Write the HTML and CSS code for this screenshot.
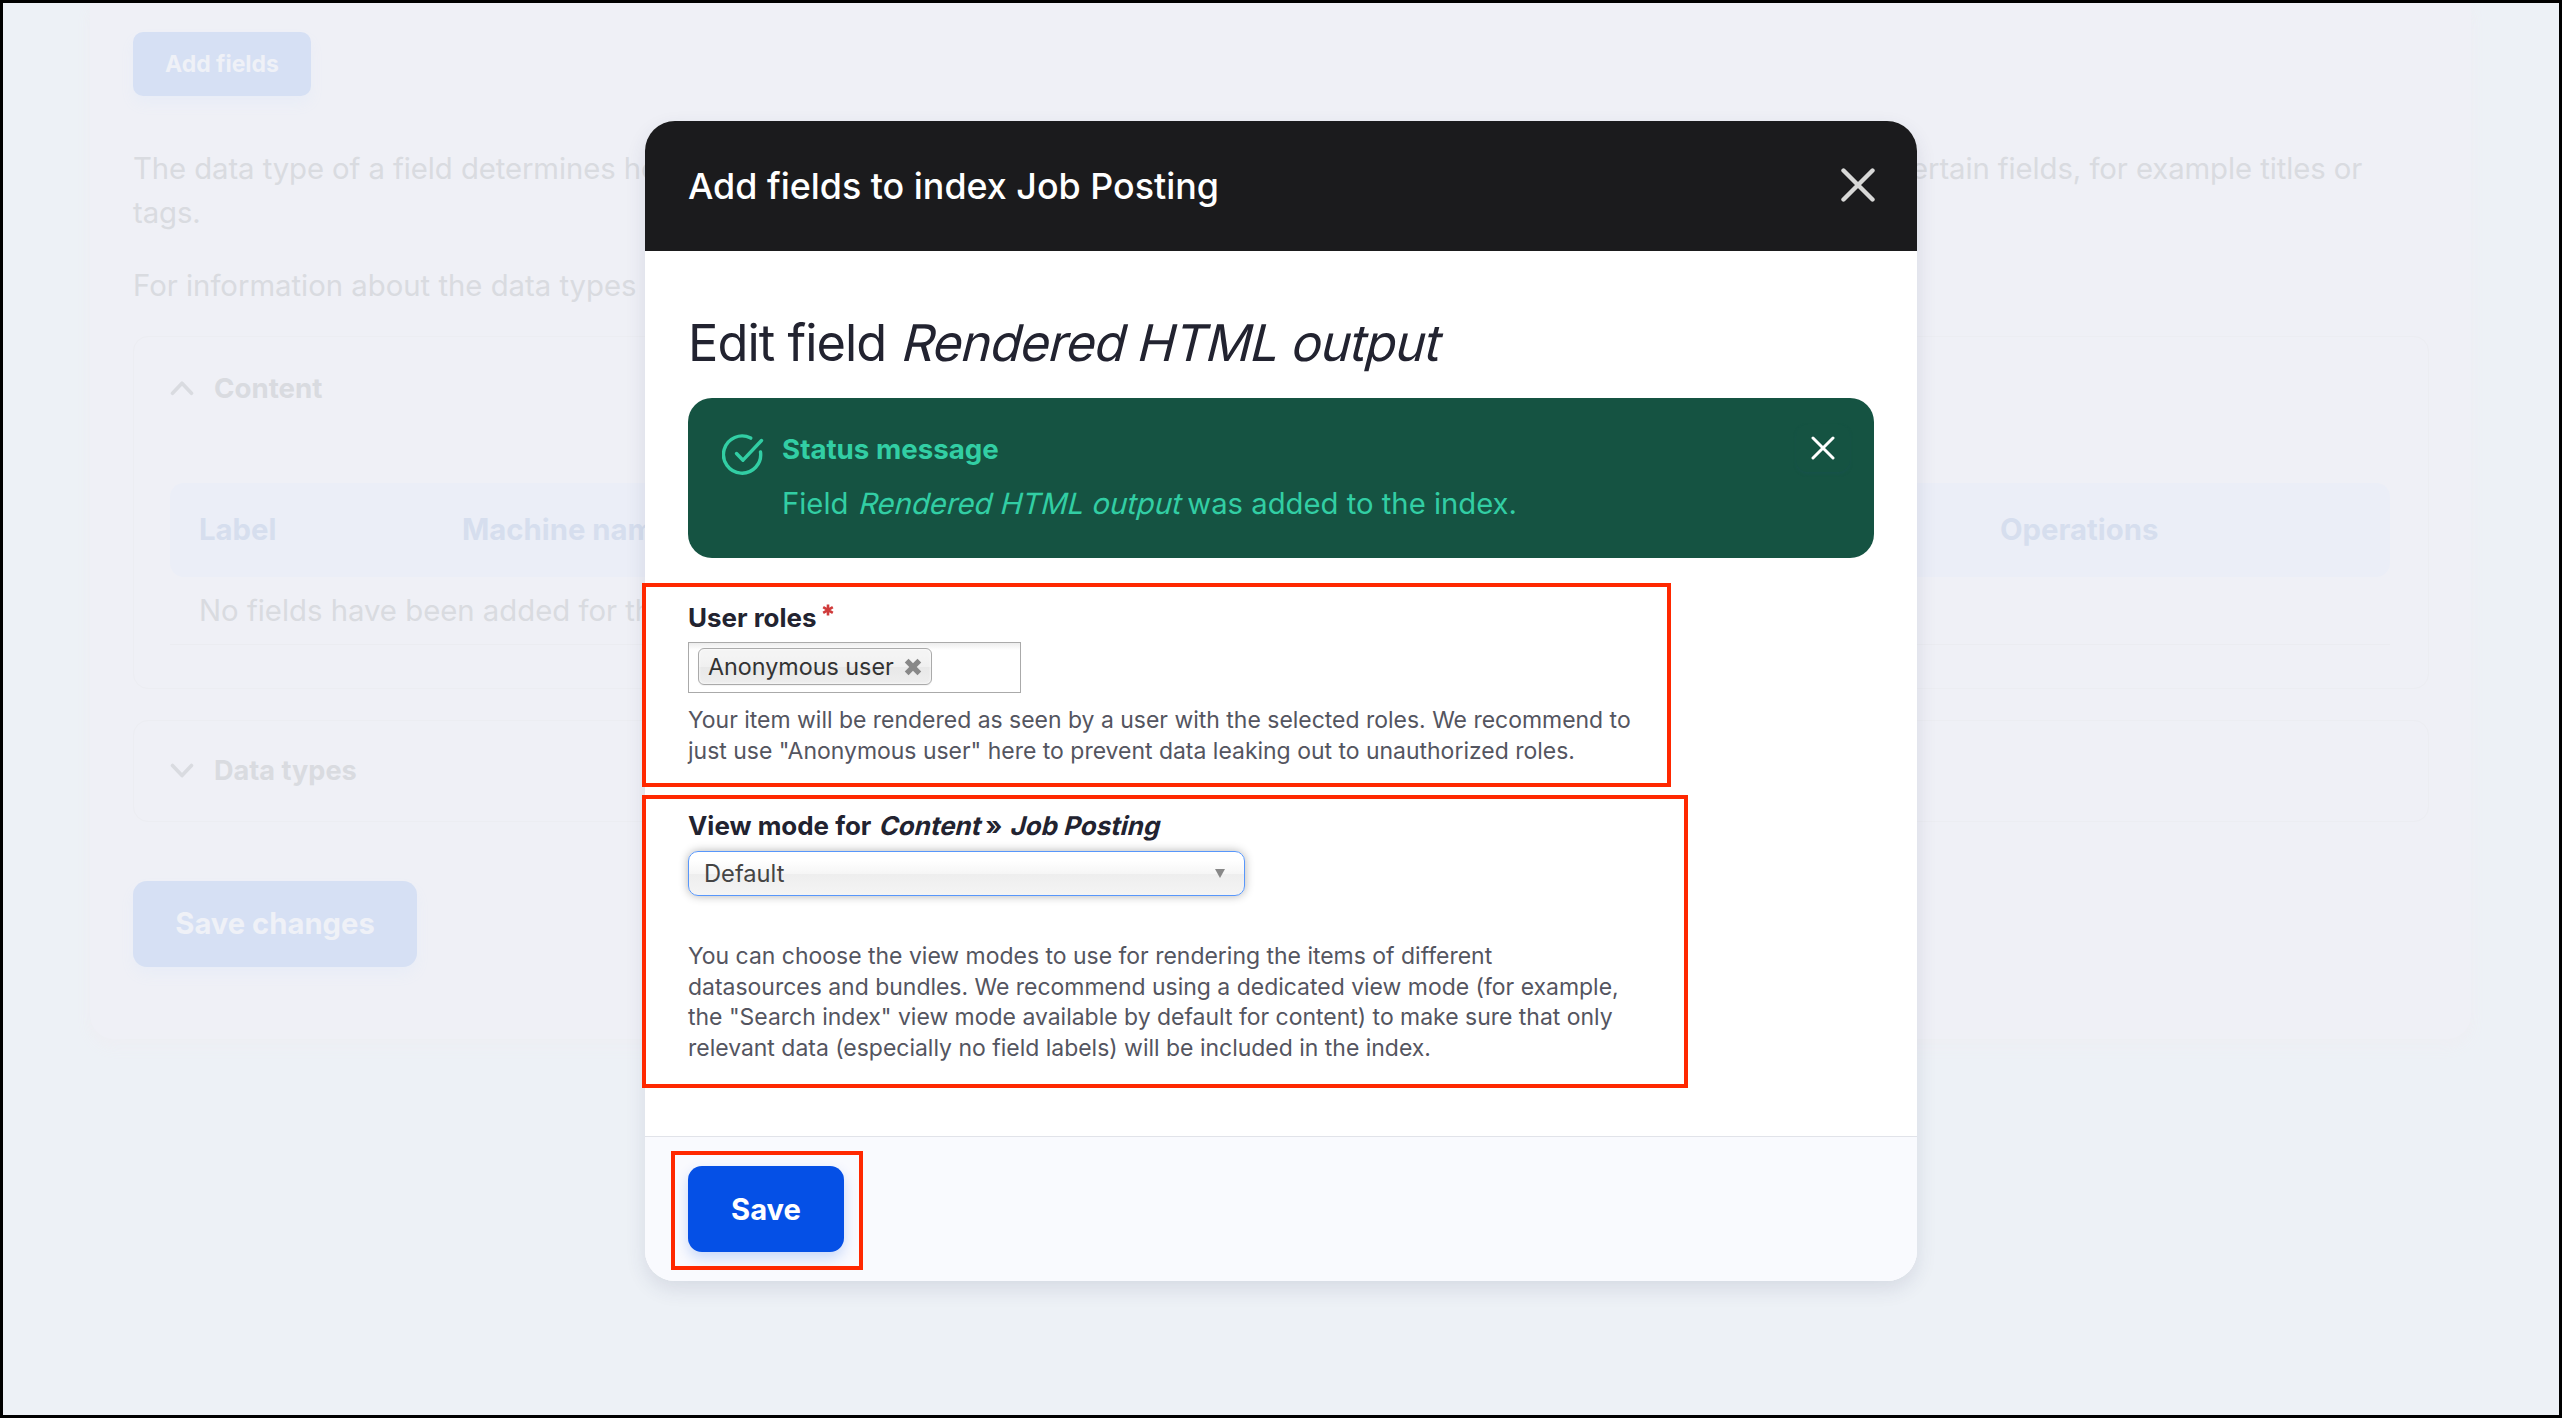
FILE: index.html
```html
<!DOCTYPE html>
<html lang="en">
<head>
<meta charset="utf-8">
<title>Add fields to index Job Posting</title>
<link rel="stylesheet" href="styles.css">
</head>
<body>
<main class="page">
  <section class="card">
    <button class="button button--small">Add fields</button>
    <p class="intro">The data type of a field determines how it can be used for searching and filtering. The boost is used to give additional weight to certain fields, for example titles or tags.</p>
    <p class="intro intro--second">For information about the data types available for indexing, see the data types table at the bottom of the page.</p>
    <div class="details details--open">
      <div class="summary">
        <svg class="chevron" viewBox="0 0 24 16"><path d="M2.500 13.300 12 3.200l9.500 10.100"/></svg>
        <span>Content</span>
      </div>
      <div class="table">
        <div class="table-head"><span>Label</span><span>Machine name</span><span>Operations</span></div>
        <div class="table-row">No fields have been added for this datasource.</div>
      </div>
    </div>
    <div class="details">
      <div class="summary summary--types">
        <svg class="chevron" viewBox="0 0 24 16"><path d="M2.500 2.500 12 12.600l9.500-10.100"/></svg>
        <span>Data types</span>
      </div>
    </div>
    <button class="button">Save changes</button>
  </section>
</main>

<div class="dialog" role="dialog">
  <header class="dialog-head">
    <h1 class="dialog-title">Add fields to index Job Posting</h1>
    <svg class="dialog-close" viewBox="0 0 34 34"><path d="M2.500 2.500 31.500 31.500M31.500 2.500 2.500 31.500"/></svg>
  </header>
  <div class="dialog-body">
    <h2 class="heading">Edit field <em>Rendered HTML output</em></h2>
    <div class="status">
      <svg class="status-icon" viewBox="0 0 42 42"><path d="M38.500 18a18.600 18.600 0 1 1-9.800-13.900"/><path d="M14.500 19.500 21 26.200 39.500 6.500"/></svg>
      <div class="status-text">
        <div class="status-title">Status message</div>
        <div class="status-message">Field <em>Rendered HTML output</em> was added to the index.</div>
      </div>
      <span class="status-dismiss"><svg viewBox="0 0 24 24"><path d="M2 2 22 22M22 2 2 22"/></svg></span>
    </div>
    <div class="field field--roles">
      <div class="label">User roles<svg class="required" viewBox="0 0 12 12"><path d="M6 .5v11M1.200 3.200l9.600 5.600M10.800 3.200 1.200 8.800"/></svg></div>
      <div class="chosen-multi">
        <span class="chip">Anonymous user<svg viewBox="0 0 17 17"><path d="M2.500 2.500l12 12M14.500 2.500l-12 12"/></svg></span>
      </div>
      <p class="description">Your item will be rendered as seen by a user with the selected roles. We recommend to just use "Anonymous user" here to prevent data leaking out to unauthorized roles.</p>
    </div>
    <div class="field field--view-mode">
      <div class="label">View mode for <em>Content</em> » <em>Job Posting</em></div>
      <div class="chosen-single"><span>Default</span><i class="caret"></i></div>
      <p class="description">You can choose the view modes to use for rendering the items of different datasources and bundles. We recommend using a dedicated view mode (for example, the "Search index" view mode available by default for content) to make sure that only relevant data (especially no field labels) will be included in the index.</p>
    </div>
  </div>
  <footer class="dialog-foot">
    <button class="button button--primary">Save</button>
  </footer>
</div>

<div class="mark mark--roles"></div>
<div class="mark mark--view-mode"></div>
<div class="mark mark--save"></div>
</body>
</html>
```
FILE: styles.css
```css
* { box-sizing: border-box; }

body {
  position: relative;
  width: 2562px;
  height: 1418px;
  margin: 0;
  border: 3px solid #000;
  background: #edf1f6;
  font-family: Inter, "Liberation Sans", sans-serif;
  overflow: hidden;
}

h1, h2, p { margin: 0; }
button { font-family: inherit; border: 0; padding: 0 0 1px; }
svg { display: block; fill: none; stroke-linecap: round; stroke-linejoin: round; flex: none; }

/* slanted roman, pivoting on the baseline */
em {
  display: inline-block;
  font-style: normal;
  transform: skewX(-14deg);
  transform-origin: left 77%;
}

/* page under the dialog */
.page { padding: 0 88px 0 87px; }

.card {
  height: 1036px;
  padding: 29px 42px 0 43px;
  border-radius: 0 0 24px 24px;
  background: #eff0f6;
  box-shadow: 0 8px 16px #eeeff4, 0 4px 10px #edeef3;
  color: #d9dbe0;
}

.button {
  display: block;
  width: 284px;
  height: 86px;
  border-radius: 14px;
  background: #d6e0f4;
  box-shadow: 0 8px 14px #e9edf7;
  color: #eff1f7;
  font-size: 29.2px;
  font-weight: 700;
}

.button--small {
  width: 178px;
  height: 64px;
  border-radius: 10px;
  font-size: 23px;
}

.intro { margin-top: 51px; font-size: 29.3px; line-height: 44px; letter-spacing: -.08px; }
.intro--second { margin-top: 29px; letter-spacing: 0; }

.details {
  height: 102px;
  margin-top: 31px;
  padding: 0 38px 0 36px;
  border: 1px solid #ecedf2;
  border-radius: 15px;
}
.details--open { height: 353px; margin-top: 28px; }
.details + .button { margin-top: 59px; }

.summary {
  display: flex;
  align-items: center;
  gap: 20px;
  height: 100px;
  padding-top: 2px;
  font-size: 27.7px;
  font-weight: 700;
}
.summary--types { padding: 0 0 1px; font-size: 27.1px; }
.chevron { width: 24px; height: 16px; stroke: #d9dbe0; stroke-width: 3.6; }

.table { margin-top: 46px; font-size: 29.3px; }
.table-head {
  display: grid;
  grid-template-columns: 263px 1fr 390px;
  align-items: center;
  height: 94px;
  padding: 0 0 2px 29px;
  border-radius: 14px;
  background: #ebeef7;
  color: #d6deee;
  font-weight: 700;
}
.table-row {
  height: 68px;
  padding-left: 29px;
  border-bottom: 1px solid #ebecf1;
  line-height: 67px;
}

/* dialog */
.dialog {
  position: absolute;
  left: 642px;
  top: 118px;
  display: flex;
  flex-direction: column;
  width: 1272px;
  height: 1160px;
  border-radius: 30px;
  overflow: hidden;
  background: #fff;
  box-shadow: 0 8px 20px rgba(50, 60, 100, .12);
  color: #222330;
}

.dialog-head {
  display: flex;
  align-items: center;
  justify-content: space-between;
  height: 130px;
  padding: 0 42px 0 43px;
  background: #1b1b1d;
}
.dialog-title { color: #fff; font-size: 35.83px; font-weight: 550; }
.dialog-close { width: 34px; height: 34px; margin-bottom: 2px; stroke: #d8d8d7; stroke-width: 4.4; }

.dialog-body { flex: 1; padding: 61px 43px 0; }

.heading {
  font-size: 50.5px;
  font-weight: 400;
  line-height: 61px;
  letter-spacing: -.94px;
  white-space: nowrap;
}

.status {
  display: flex;
  height: 160px;
  margin-top: 25px;
  padding: 29px 24px 0 34px;
  border-radius: 24px;
  background: #155342;
  color: #32cea4;
}
.status-icon { width: 42px; height: 42px; margin-top: 7px; stroke: #32cea4; stroke-width: 3.4; }
.status-text { flex: 1; margin-left: 18px; line-height: 44px; }
.status-title { font-size: 27.7px; font-weight: 700; }
.status-message { margin-top: 11px; font-size: 29.25px; }
.status-dismiss {
  display: grid;
  place-items: center;
  width: 54px;
  height: 48px;
  border-radius: 12px;
  box-shadow: 0 2px 3px #17524a;
  background: #155342;
  margin-top: -3px;
}
.status-dismiss svg { width: 24px; height: 24px; stroke: #fff; stroke-width: 3; }

.field--roles { margin-top: 42px; }
.field--view-mode { margin-top: 42px; }

.label {
  display: flex;
  font-size: 25.95px;
  font-weight: 700;
  line-height: 36px;
  white-space: pre;
}
.required { width: 12px; height: 12px; margin: 4px 0 0 5px; stroke: #d03b3b; stroke-width: 2.6; stroke-linecap: butt; }

.chosen-multi {
  display: flex;
  width: 333px;
  height: 51px;
  margin-top: 6px;
  padding: 5px 9px;
  border: 1px solid #aaa;
  background: linear-gradient(#eee 1%, #fff 15%);
}
.chip {
  display: flex;
  align-items: center;
  justify-content: space-between;
  width: 234px;
  height: 37px;
  padding: 0 9px;
  border: 1px solid #aaa;
  border-radius: 6px;
  background: linear-gradient(#f4f4f4 20%, #f0f0f0 50%, #e8e8e8 52%, #eee 100%);
  box-shadow: 0 0 3px #fff inset, 0 1px 1px rgba(0, 0, 0, .05);
  color: #333;
  font-size: 23.3px;
}
.chip svg { width: 18px; height: 18px; stroke: #888; stroke-width: 5; stroke-linecap: butt; }

.chosen-single {
  display: flex;
  align-items: center;
  justify-content: space-between;
  width: 557px;
  height: 45px;
  margin-top: 7px;
  padding: 0 19px 0 15px;
  border: 1px solid #5897fb;
  border-radius: 10px;
  background: linear-gradient(#fff 20%, #f6f6f6 50%, #eee 52%, #f4f4f4 100%);
  box-shadow: 0 0 10px rgba(0, 0, 0, .3);
  color: #444;
  font-size: 23.7px;
}
.caret { border: 5.500px solid transparent; border-top: 9px solid #888; border-bottom: 0; margin-bottom: 1px; }

.description { width: 950px; margin-top: 12px; color: #545560; font-size: 22.96px; line-height: 30.6px; }
.chosen-single + .description { width: 939px; margin-top: 45px; }

.dialog-foot {
  height: 145px;
  padding: 29px 43px 0;
  border-top: 1px solid #e1e3e9;
  background: #f9fafe;
}
.button--primary {
  width: 156px;
  padding: 0;
  background: #0550e6;
  box-shadow: 0 6px 14px rgba(5, 80, 230, .2);
  color: #fff;
}

/* callout frames drawn over the screen */
.mark { position: absolute; border: 4px solid #ff2800; }
.mark--roles { left: 639px; top: 580px; width: 1029px; height: 204px; }
.mark--view-mode { left: 639px; top: 792px; width: 1046px; height: 293px; }
.mark--save { left: 668px; top: 1148px; width: 192px; height: 119px; }
```
